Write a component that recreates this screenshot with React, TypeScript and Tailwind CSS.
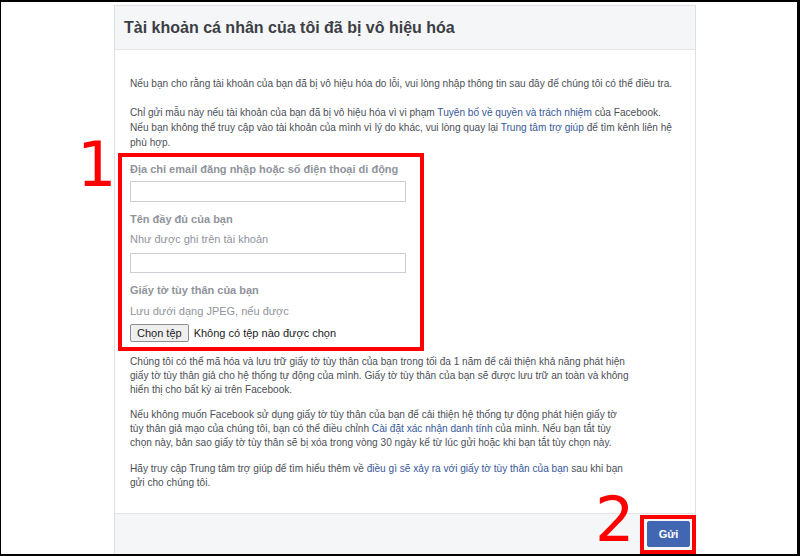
import React from 'react';

const Link: React.FC<{ children: React.ReactNode }> = ({ children }) => (
  <span className="text-[#365899]">{children}</span>
);

export default function App() {
  return (
    <div className="relative w-[800px] h-[556px] overflow-hidden bg-white border-t-2 border-l border-r-[3px] border-b-2 border-black font-['Liberation_Sans',Arial,sans-serif]">
      <div className="ml-[113px] mt-[3px] w-[582px] h-[551px] border border-[#dddfe2] flex flex-col">
        <div className="h-[44px] shrink-0 bg-[#f5f6f7] border-b border-[#e5e5e5] px-[9px] flex items-center">
          <h2 className="text-[16px] font-bold text-[#3b3e44]">Tài khoản cá nhân của tôi đã bị vô hiệu hóa</h2>
        </div>

        <div className="flex-1 pl-[15px] pr-[10px] pt-[26px] text-[10.1px] text-[#4b4f56]">
          <p className="leading-[15px]">
            Nếu bạn cho rằng tài khoản của bạn đã bị vô hiệu hóa do lỗi, vui lòng nhập thông tin sau đây để chúng tôi có thể điều tra.
          </p>
          <p className="mt-[14px] leading-[15px]">
            Chỉ gửi mẫu này nếu tài khoản của bạn đã bị vô hiệu hóa vì vi phạm <Link>Tuyên bố về quyền và trách nhiệm</Link> của Facebook.
            <br />
            Nếu bạn không thể truy cập vào tài khoản của mình vì lý do khác, vui lòng quay lại <Link>Trung tâm trợ giúp</Link> để tìm kênh liên hệ
            <br />
            phù hợp.
          </p>

          <div className="mt-[12px] flex flex-col text-[#90949c]">
            <label className="leading-[15px] text-[11px] font-bold">Địa chỉ email đăng nhập hoặc số điện thoại di động</label>
            <div className="mt-[4px] w-[276px] h-[21px] border border-[#ccd0d5] bg-white" />

            <label className="mt-[10px] leading-[15px] text-[11px] font-bold">Tên đầy đủ của bạn</label>
            <span className="mt-[5px] leading-[15px] text-[11px]">Như được ghi trên tài khoản</span>
            <div className="mt-[6px] w-[276px] h-[20px] border border-[#ccd0d5] bg-white" />

            <label className="mt-[10px] leading-[15px] text-[11px] font-bold">Giấy tờ tùy thân của bạn</label>
            <span className="mt-[6px] leading-[15px] text-[11px]">Lưu dưới dạng JPEG, nếu được</span>
            <div className="mt-[5px] flex items-center gap-[5px] text-[11px] text-[#222]">
              <button className="h-[18px] px-[6px] border border-[#8f8f8f] rounded-[2px] bg-[#efefef] leading-none">Chọn tệp</button>
              <span>Không có tệp nào được chọn</span>
            </div>
          </div>

          <p className="mt-[13px] leading-[14px]">
            Chúng tôi có thể mã hóa và lưu trữ giấy tờ tùy thân của bạn trong tối đa 1 năm để cải thiện khả năng phát hiện
            <br />
            giấy tờ tùy thân giả cho hệ thống tự động của mình. Giấy tờ tùy thân của bạn sẽ được lưu trữ an toàn và không
            <br />
            hiển thị cho bất kỳ ai trên Facebook.
          </p>
          <p className="mt-[11px] leading-[14px]">
            Nếu không muốn Facebook sử dụng giấy tờ tùy thân của bạn để cải thiện hệ thống tự động phát hiện giấy tờ
            <br />
            tùy thân giả mạo của chúng tôi, bạn có thể điều chỉnh <Link>Cài đặt xác nhận danh tính</Link> của mình. Nếu bạn tắt tùy
            <br />
            chọn này, bản sao giấy tờ tùy thân sẽ bị xóa trong vòng 30 ngày kể từ lúc gửi hoặc khi bạn tắt tùy chọn này.
          </p>
          <p className="mt-[12px] leading-[14px]">
            Hãy truy cập Trung tâm trợ giúp để tìm hiểu thêm về <Link>điều gì sẽ xảy ra với giấy tờ tùy thân của bạn</Link> sau khi bạn
            <br />
            gửi cho chúng tôi.
          </p>
        </div>

        <div className="h-[42px] shrink-0 bg-[#f5f6f7] border-t border-[#e5e5e5] flex items-start justify-end pt-[7px] pr-[5px]">
          <button className="w-[43px] h-[26px] bg-[#4267b2] border border-[#4267b2] text-white text-[11px] font-bold rounded-[2px]">
            Gửi
          </button>
        </div>
      </div>

      {/* annotations */}
      <div className="absolute left-[117px] top-[151px] w-[306px] h-[198px] border-4 border-[#ff0000]" />
      <div className="absolute left-[76px] top-[132px] text-[62px] leading-none text-[#ff0000] font-['DejaVu_Sans',sans-serif]">1</div>
      <div className="absolute left-[639px] top-[513px] w-[56px] h-[39px] border-4 border-[#ff0000]" />
      <div className="absolute left-[594px] top-[487px] text-[62px] leading-none text-[#ff0000] font-['DejaVu_Sans',sans-serif]">2</div>
    </div>
  );
}
